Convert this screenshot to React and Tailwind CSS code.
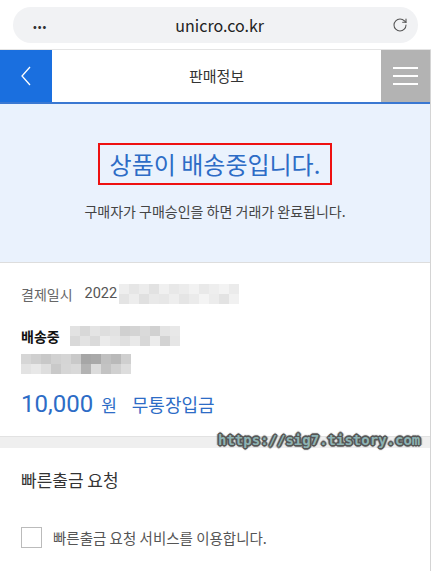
import { RotateCw } from "lucide-react";

const blurA = [
  ["#eeeeee", "#e6e6e6", "#ececec", "#e2e2e2", "#f0f0f0", "#e8e8e8", "#ececec", "#f2f2f2", "#e9e9e9", "#eeeeee", "#f3f3f3", "#ebebeb"],
  ["#e4e4e4", "#ededed", "#e0e0e0", "#e9e9e9", "#e7e7e7", "#eeeeee", "#e5e5e5", "#ebebeb", "#f4f4f4", "#ececec", "#e3e3e3", "#f1f1f1"],
];
const blurB = [
  ["#e2e2e2", "#d8d8d8", "#e4e4e4", "#dedede", "#e2e2e2", "#d0d0d0", "#d4d4d4", "#dadada", "#d1d1d1", "#e4e4e4", "#e8e8e8"],
  ["#d9d9d9", "#e3e3e3", "#dadada", "#ebebeb", "#e6e6e6", "#e0e0e0", "#e9e9e9", "#d8d8d8", "#ececec", "#d3d3d3", "#e6e6e6"],
];
const blurC = [
  ["#d6d6d6", "#cfcfcf", "#c8c8c8", "#d1d1d1", "#d5d5d5", "#c9c9c9", "#a6a6a6", "#a9a9a9", "#c0c0c0", "#b9b9b9", "#cfcfcf"],
  ["#e3e3e3", "#e8e8e8", "#dedede", "#c9c9c9", "#d6d6d6", "#d9d9d9", "#b3b3b3", "#dcdcdc", "#c3c3c3", "#d0d0d0", "#dddddd"],
];

function Blur({ rows, cell = 10 }) {
  return (
    <div className="flex flex-col">
      {rows.map((row, i) => (
        <div key={i} className="flex">
          {row.map((c, j) => (
            <div key={j} style={{ backgroundColor: c, width: cell, height: cell }} />
          ))}
        </div>
      ))}
    </div>
  );
}

export default function App() {
  return (
    <div className="relative w-[431px] h-[571px] overflow-hidden bg-white font-['Noto_Sans_CJK_KR','Noto_Sans',sans-serif]">
      {/* browser bar */}
      <div className="h-[50px] px-[13px] pt-[7px] border-b border-[#e4e4e4]">
        <div className="h-[36px] rounded-full bg-[#f1f2f4] flex items-center justify-between pl-[20px] pr-[10px]">
          <span className="text-[10px] tracking-[1px] text-[#333] font-bold">•••</span>
          <span className="text-[16px] text-[#222]">unicro.co.kr</span>
          <RotateCw size={16} strokeWidth={1.6} className="text-[#555]" />
        </div>
      </div>

      <div className="border-r border-[#d4d4d4]">
        {/* header */}
        <div className="h-[54px] flex border-b-2 border-[#3a78d2]">
          <div className="w-[52px] bg-[#1a6fdf] flex items-center justify-center">
            <svg width="12" height="22" viewBox="0 0 12 22" fill="none" stroke="white" strokeWidth="1.3">
              <path d="M10 2 L2 11 L10 20" />
            </svg>
          </div>
          <div className="flex-1 flex items-center justify-center text-[15px] text-[#333]">판매정보</div>
          <div className="w-[49px] bg-[#b3b3b3] flex flex-col items-center justify-center gap-[6px]">
            <div className="w-[25px] h-[2px] bg-white" />
            <div className="w-[25px] h-[2px] bg-white" />
            <div className="w-[25px] h-[2px] bg-white" />
          </div>
        </div>

        {/* status */}
        <div className="h-[159px] bg-[#eaf2fd] border-b border-[#dddddd] flex flex-col items-center pt-[39px]">
          <div className="border-2 border-[#ee1111] px-[10px] h-[42px] flex items-center">
            <span className="text-[24px] text-[#2d6cc6] leading-none">상품이 배송중입니다.</span>
          </div>
          <p className="mt-[16px] text-[14px] text-[#444]">구매자가 구매승인을 하면 거래가 완료됩니다.</p>
        </div>

        {/* info */}
        <div className="px-[21px] pt-[21px] h-[174px] border-b border-[#e2e2e2]">
          <div className="flex items-center h-[20px]">
            <span className="text-[14px] text-[#666]">결제일시</span>
            <span className="ml-[12px] text-[14.5px] text-[#555] font-['Roboto',sans-serif]">2022</span>
            <div className="ml-[2px]">
              <Blur rows={blurA} />
            </div>
          </div>
          <div className="flex items-center h-[20px] mt-[22px]">
            <span className="text-[14px] font-bold text-[#111]">배송중</span>
            <div className="ml-[10px]">
              <Blur rows={blurB} />
            </div>
          </div>
          <div className="mt-[8px]">
            <Blur rows={blurC} />
          </div>
          <div className="flex items-baseline mt-[12px] text-[#2d6cc6]">
            <span className="text-[24px] font-['Roboto',sans-serif]">10,000</span>
            <span className="ml-[8px] text-[17px]">원</span>
            <span className="ml-[15px] text-[18px]">무통장입금</span>
          </div>
        </div>

        <div className="h-[11px] bg-[#efefef]" />

        {/* quick withdraw */}
        <div className="px-[21px] pt-[19px] h-[134px]">
          <div className="text-[17px] text-[#333]">빠른출금 요청</div>
          <div className="flex items-center mt-[34px]">
            <div className="w-[21px] h-[21px] border border-[#bbbbbb] bg-white" />
            <span className="ml-[11px] text-[14.5px] text-[#555]">빠른출금 요청 서비스를 이용합니다.</span>
          </div>
        </div>
      </div>

      {/* watermark */}
      <div className="absolute left-[218px] top-[430px] text-[14px] font-bold font-['DejaVu_Sans_Mono',monospace] text-[#8db3b3] [text-shadow:1px_0_0_#555,-1px_0_0_#555,0_1px_0_#555,0_-1px_0_#555,1px_1px_0_#555,-1px_-1px_0_#555,1px_-1px_0_#555,-1px_1px_0_#555,2px_0_1px_#666,-2px_0_1px_#666,0_2px_1px_#666,0_-2px_1px_#666]">
        https://sig7.tistory.com
      </div>
    </div>
  );
}
